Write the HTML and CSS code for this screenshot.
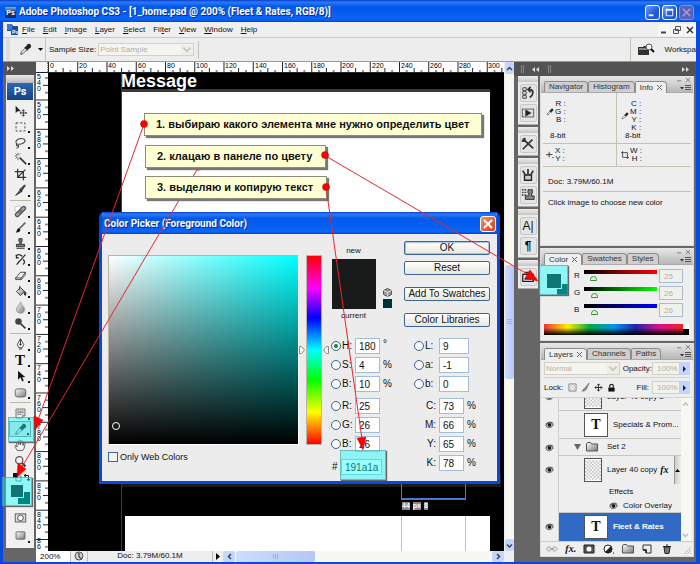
FILE: index.html
```html
<!DOCTYPE html>
<html lang="ru">
<head>
<meta charset="utf-8">
<title>Adobe Photoshop CS3</title>
<link rel="stylesheet" href="styles.css">
</head>
<body>
<svg class="defs" aria-hidden="true">
  <defs>
    <linearGradient id="metal" x1="0" y1="0" x2="1" y2="1"><stop offset="0" stop-color="#fff"/><stop offset="1" stop-color="#777"/></linearGradient>
    <pattern id="checks" width="4" height="4" patternUnits="userSpaceOnUse"><rect width="4" height="4" fill="#fff"/><path d="M0 0h2v2H0zM2 2h2v2H2z" fill="#c4c4c4"/></pattern>
    <pattern id="ticks-x" width="29.25" height="11" patternUnits="userSpaceOnUse"><path d="M.5 0v11M7.8 8v3M15.1 6v5M22.4 8v3" stroke="#222" fill="none"/></pattern>
    <pattern id="ticks-y" y="26.5" width="12" height="29.3" patternUnits="userSpaceOnUse"><path d="M0 .5h12M9 7.8h3M7 15.1h5M9 22.4h3" stroke="#222" fill="none"/></pattern>
  </defs>
  <symbol id="eyedropper" viewBox="0 0 16 16"><path d="M2 14l1-3 5-5 2 2-5 5z" fill="#eee" stroke="#333" stroke-width="1"/><path d="M7 5l4 4M8 6l3-4c2-1 4 1 3 3l-4 3z" fill="#222" stroke="#222" stroke-width="1.3"/></symbol>
  <symbol id="eye" viewBox="0 0 12 10"><path d="M1 6c1-4 8-5 10-1-2 4-8 5-10 1z" fill="#bbb" stroke="#444"/><circle cx="6" cy="5" r="2.3" fill="#111"/><path d="M1 4c2-3 7-4 10-1" fill="none" stroke="#222" stroke-width="1.2"/></symbol>
  <symbol id="flyout" viewBox="0 0 12 8"><path d="M0 3h4l-2 2.500z" fill="#333"/><path d="M5 1.500h6M5 3.500h6M5 5.500h6" stroke="#555"/></symbol>
  <symbol id="winctl" viewBox="0 0 16 8"><path d="M0 5.500h5M10 2l5 5M15 2l-5 5" stroke="#777" fill="none"/></symbol>
  <symbol id="folder" viewBox="0 0 12 10"><path d="M.5 9V2l1-1.500h3l1 1.500h6v7z" fill="url(#metal)" stroke="#555"/></symbol>
</svg>

<div class="window">
  <header class="titlebar">
    <span class="logo">Ps</span>
    <h1>Adobe Photoshop CS3 - [1_home.psd @ 200% (Fleet &amp; Rates, RGB/8)]</h1>
    <button class="sys" aria-label="Minimize"><svg viewBox="0 0 14 14"><path d="M3 10h5" stroke="#fff" stroke-width="2"/></svg></button>
    <button class="sys" aria-label="Maximize"><svg viewBox="0 0 14 14"><path d="M3.500 4v6.500h7V4z" fill="none" stroke="#fff"/><path d="M3 4h8" stroke="#fff" stroke-width="2"/></svg></button>
    <button class="sys sys-off" aria-label="Close"><svg viewBox="0 0 14 14"><path d="M3 3l8 8M11 3l-8 8" stroke="#a9a4d6" stroke-width="1.500"/></svg></button>
  </header>

  <nav class="menubar">
    <svg class="docicon" viewBox="0 0 13 13"><path d="M1 1h5l1 2h5v9H5V8H1z" fill="#1a4c9c"/><path d="M1 1h5v6H1z" fill="#3d79c9"/><text x="6" y="11" class="ps-mini">Ps</text></svg>
    <button><u>F</u>ile</button><button><u>E</u>dit</button><button><u>I</u>mage</button><button><u>L</u>ayer</button><button><u>S</u>elect</button><button>Fil<u>t</u>er</button><button><u>V</u>iew</button><button><u>W</u>indow</button><button><u>H</u>elp</button>
    <span class="docctl">
      <button aria-label="Minimize document"><svg viewBox="0 0 12 12"><path d="M3 8.500h5" stroke="#444" stroke-width="2"/></svg></button>
      <button aria-label="Restore document"><svg viewBox="0 0 12 12"><path d="M4.500 2.500h5v4h-5zM2.500 5.500h5v4h-5z" fill="#eee" stroke="#555"/></svg></button>
      <button aria-label="Close document"><svg viewBox="0 0 12 12"><path d="M3 3l6 6M9 3l-6 6" stroke="#333" stroke-width="1.500"/></svg></button>
    </span>
  </nav>

  <div class="options">
    <button class="current-tool" aria-label="Eyedropper tool"><svg class="i14" viewBox="0 0 16 16"><use href="#eyedropper"/></svg><svg class="i5" viewBox="0 0 5 3"><path d="M0 0h5L2.500 3z"/></svg></button>
    <label for="sample">Sample Size:</label>
    <span class="drop sample"><select id="sample" disabled><option>Point Sample</option></select><svg viewBox="0 0 10 8"><path d="M2 2l3 3 3-3" fill="none" stroke="#c9c7ba" stroke-width="1.500"/></svg></span>
    <span class="rule"></span>
    <button class="bridge" aria-label="Go to Bridge"><svg viewBox="0 0 18 14"><path d="M1 4h5l1-1h5v9H1z" fill="#333"/><path d="M2 5h9v2H2z" fill="#888"/><circle cx="12" cy="4" r="3" fill="#f4f4f4" stroke="#555"/><path d="M14 6l3 3" stroke="#111" stroke-width="2"/></svg></button>
    <span class="workspace-label">Workspa</span>
  </div>

  <main class="work">
    <aside class="toolbox">
      <div class="dockbar"><svg viewBox="0 0 8 5"><path d="M0 0l3 2.500L0 5zM4 0l3 2.500L4 5z" fill="#ddd"/></svg></div>
      <div class="tools">
        <span class="grip"></span>
        <span class="ps">Ps</span>
        <button aria-label="Move"><svg viewBox="0 0 16 16"><path d="M2 2v9l2.500-2 4 0z" fill="#222"/><path d="M11.500 7v8M7.500 11h8M10 8.500L11.500 7 13 8.500M10 13.500l1.500 1.500 1.500-1.500M9 9.500L7.500 11 9 12.500M14 9.500l1.500 1.500-1.500 1.500" fill="none" stroke="#222"/></svg></button>
        <button class="more" aria-label="Marquee"><svg viewBox="0 0 16 16"><path d="M2.500 3.500h11v10h-11z" fill="none" stroke="#333" stroke-dasharray="3 2"/></svg></button>
        <button class="more" aria-label="Lasso"><svg viewBox="0 0 16 16"><path d="M4 10C0 7 4 3 9 3s6 4 2 6-5 1-7 1-1 3 1 2 0 3-2 3" fill="none" stroke="#444" stroke-width="1.300"/></svg></button>
        <button class="more" aria-label="Magic wand"><svg viewBox="0 0 16 16"><path d="M7 7l8 8" stroke="#333" stroke-width="2"/><path d="M5 1v3M5 7v3M1 5h3M2 2l2 2M8 2L7 3M2 8l2-2" stroke="#444"/></svg></button>
        <button aria-label="Crop"><svg viewBox="0 0 16 16"><path d="M4.500 1v10.500H15M1 4.500h10.500V15M5 11l9-9" fill="none" stroke="#333" stroke-width="1.500"/></svg></button>
        <button class="more" aria-label="Slice"><svg viewBox="0 0 16 16"><path d="M2 14l6-7 2 2zM7 7l6-6 1 1-5 7z" fill="#555" stroke="#222"/></svg></button>
        <span class="sep"></span>
        <button class="more" aria-label="Healing brush"><svg viewBox="0 0 16 16"><circle cx="5" cy="5" r="4" fill="#fff" stroke="#bbb"/><path d="M4 12l8-8" stroke="#555" stroke-width="6" stroke-linecap="round"/><path d="M4 12l8-8" stroke="#aaa" stroke-width="3" stroke-linecap="round"/><path d="M6 10l4-4" stroke="#444" stroke-width="3" stroke-dasharray="1 1"/></svg></button>
        <button class="more" aria-label="Brush"><svg viewBox="0 0 16 16"><path d="M6 10l8-8" stroke="#666" stroke-width="2"/><path d="M2 14c2-1 1-4 4-5l2 2c-1 3-4 3-6 3z" fill="#111"/></svg></button>
        <button class="more" aria-label="Clone stamp"><svg viewBox="0 0 16 16"><path d="M6 2h4v3L9 7v2h4v3H3V9h4V7L6 5zM3 14h10" fill="#777" stroke="#222"/></svg></button>
        <button class="more" aria-label="History brush"><svg viewBox="0 0 16 16"><path d="M3 14c2 0 2-3 4-4l7-8M2 4c3-3 6-2 8 0M11 8c3 2 2 5 0 6M3 2v4h3" fill="none" stroke="#222" stroke-width="1.500"/></svg></button>
        <button class="more" aria-label="Eraser"><svg viewBox="0 0 16 16"><path d="M2 11l6-7h6l-5 7zM2 11v2h7l5-6V4M9 11v2" fill="#eee" stroke="#333"/></svg></button>
        <button class="more" aria-label="Paint bucket"><svg viewBox="0 0 16 16"><path d="M3 8l5-5 5 5-5 5z" fill="url(#metal)" stroke="#222"/><path d="M7 1v5M13 8c2 1 2 3 1 5-2-1-1-3-1-5z" fill="#222" stroke="#222"/></svg></button>
        <button class="more" aria-label="Blur"><svg viewBox="0 0 16 16"><path d="M8 1c1 4 5 6 5 9a5 5 0 0 1-10 0c0-3 4-5 5-9z" fill="url(#metal)" stroke="#999"/></svg></button>
        <button class="more" aria-label="Dodge"><svg viewBox="0 0 16 16"><circle cx="5.500" cy="5.500" r="4" fill="#444"/><path d="M8 8l6 6" stroke="#333" stroke-width="2"/></svg></button>
        <span class="sep"></span>
        <button class="more" aria-label="Pen"><svg viewBox="0 0 16 16"><path d="M8 1l4 7-2 4H6L4 8zM8 1v7M6 13.500h4" fill="#fff" stroke="#222"/><circle cx="8" cy="8" r="1.200"/></svg></button>
        <button class="more glyph-t" aria-label="Type">T</button>
        <button class="more" aria-label="Path selection"><svg viewBox="0 0 16 16"><path d="M5 1v11l3-3 2 5 2-1-2-4h4z" fill="#111"/></svg></button>
        <button class="more" aria-label="Shape"><svg viewBox="0 0 16 16"><rect x="1.500" y="3.500" width="13" height="10" rx="3" fill="url(#metal)" stroke="#555"/></svg></button>
        <span class="sep"></span>
        <button class="more" aria-label="Notes"><svg viewBox="0 0 16 16"><path d="M2.500 2.500h11v8l-3 3h-8z" fill="#eee" stroke="#555"/><path d="M4 5h8M4 7h8M4 9h5M10.500 13v-3h3" fill="none" stroke="#666"/></svg></button>
        <button class="more active" aria-label="Eyedropper"><svg viewBox="0 0 16 16"><use href="#eyedropper"/></svg></button>
        <button aria-label="Hand"><svg viewBox="0 0 16 16"><path d="M4 14C2 11 0 8 2 8l2 2-1-6c1-2 2 0 2 0l1 3V2c1-2 2 0 2 0v5l1-4c1-2 2 0 2 0v5l1-3c2-1 2 1 1 3 0 3-1 4-2 6z" fill="#f5f5f5" stroke="#444"/></svg></button>
        <button aria-label="Zoom"><svg viewBox="0 0 16 16"><circle cx="6.500" cy="6.500" r="4.500" fill="#eee" stroke="#555" stroke-width="1.500"/><path d="M10 10l4 4" stroke="#222" stroke-width="2.500"/></svg></button>
        <span class="mini"><svg viewBox="0 0 24 9"><path d="M8 3h5v5H8z" fill="#fff" stroke="#777"/><path d="M5 0h5v5H5z" fill="#111"/><path d="M16 2.500h4.500V7M18 1l-2 1.500L18 4M19 6l1.500 2L22 6" fill="none" stroke="#222"/></svg></span>
        <span class="swatches"><i class="bg"></i><i class="fg"></i></span>
        <button aria-label="Quick mask"><svg viewBox="0 0 16 16"><rect x="1.500" y="3.500" width="13" height="10" fill="#ddd" stroke="#444"/><circle cx="8" cy="8.500" r="3.500" fill="#fff" stroke="#333"/></svg></button>
        <button class="more" aria-label="Screen mode"><svg viewBox="0 0 16 16"><rect x="2.500" y="3.500" width="11" height="9" rx="1" fill="url(#metal)" stroke="#555"/></svg></button>
      </div>
    </aside>

    <section class="document">
      <div class="ruler-x"><span class="corner"></span><svg class="ruler-svg"><rect width="100%" height="11" fill="url(#ticks-x)"/><g><text x="2" y="6">0</text><text x="31" y="6">20</text><text x="60" y="6">40</text><text x="90" y="6">60</text><text x="119" y="6">80</text><text x="148" y="6">100</text><text x="177" y="6">120</text><text x="207" y="6">140</text><text x="236" y="6">160</text><text x="265" y="6">180</text><text x="294" y="6">200</text><text x="324" y="6">220</text><text x="353" y="6">240</text><text x="382" y="6">260</text><text x="411" y="6">280</text><text x="440" y="6">300</text></g></svg></div>
      <div class="ruler-y"><svg class="ruler-svg"><rect width="12" height="100%" fill="url(#ticks-y)"/><g>
        <text><tspan x="1" y="6">5</tspan><tspan x="1" y="12">4</tspan><tspan x="1" y="18">0</tspan></text>
        <text><tspan x="1" y="34">5</tspan><tspan x="1" y="40">6</tspan><tspan x="1" y="46">0</tspan></text>
        <text><tspan x="1" y="63">5</tspan><tspan x="1" y="69">8</tspan><tspan x="1" y="75">0</tspan></text>
        <text><tspan x="1" y="92">6</tspan><tspan x="1" y="98">0</tspan><tspan x="1" y="104">0</tspan></text>
        <text><tspan x="1" y="122">6</tspan><tspan x="1" y="128">2</tspan><tspan x="1" y="134">0</tspan></text>
        <text><tspan x="1" y="151">6</tspan><tspan x="1" y="157">4</tspan><tspan x="1" y="163">0</tspan></text>
        <text><tspan x="1" y="180">6</tspan><tspan x="1" y="186">6</tspan><tspan x="1" y="192">0</tspan></text>
        <text><tspan x="1" y="210">6</tspan><tspan x="1" y="216">8</tspan><tspan x="1" y="222">0</tspan></text>
        <text><tspan x="1" y="239">7</tspan><tspan x="1" y="245">0</tspan><tspan x="1" y="251">0</tspan></text>
        <text><tspan x="1" y="268">7</tspan><tspan x="1" y="274">2</tspan><tspan x="1" y="280">0</tspan></text>
        <text><tspan x="1" y="297">7</tspan><tspan x="1" y="303">4</tspan><tspan x="1" y="309">0</tspan></text>
        <text><tspan x="1" y="327">7</tspan><tspan x="1" y="333">6</tspan><tspan x="1" y="339">0</tspan></text>
        <text><tspan x="1" y="356">7</tspan><tspan x="1" y="362">8</tspan><tspan x="1" y="368">0</tspan></text>
        <text><tspan x="1" y="385">8</tspan><tspan x="1" y="391">0</tspan><tspan x="1" y="397">0</tspan></text>
        <text><tspan x="1" y="415">8</tspan><tspan x="1" y="421">2</tspan><tspan x="1" y="427">0</tspan></text>
        <text><tspan x="1" y="444">8</tspan><tspan x="1" y="450">4</tspan><tspan x="1" y="456">0</tspan></text>
        <text><tspan x="1" y="470">8</tspan><tspan x="1" y="476">6</tspan></text></g></svg></div>
      <div class="canvas">
        <div class="art art-band"></div>
        <div class="art art-heading">Message</div>
        <div class="art art-page"></div>
        <div class="art art-shade"></div>
        <div class="art art-foot"></div>
        <div class="art guide guide-a"></div>
        <div class="art guide-box"></div>
        <div class="art guide-box guide-low"></div>
        <div class="art art-tag"><b>44</b><b>px</b><b>8</b></div>
      </div>
      <div class="vscroll">
        <button aria-label="Scroll up"><svg viewBox="0 0 9 9"><path d="M2 6l2.500-2.500L7 6" fill="none" stroke="#345" stroke-width="1.500"/></svg></button>
        <span class="gap-top"></span><span class="thumb"><i></i></span><span class="gap-bottom"></span>
        <button aria-label="Scroll down"><svg viewBox="0 0 9 9"><path d="M2 3.500L4.500 6 7 3.500" fill="none" stroke="#345" stroke-width="1.500"/></svg></button>
      </div>
      <footer class="status">
        <input class="zoomlevel" aria-label="Zoom" value="200%">
        <span class="cs"><svg viewBox="0 0 12 10"><circle cx="6" cy="5" r="4" fill="#ccc" stroke="#555"/><path d="M6 2v4l3 2" stroke="#222" fill="none"/></svg></span>
        <span class="docsize">Doc: 3.79M/60.1M</span>
        <button class="play" aria-label="Status menu"><svg viewBox="0 0 5 7"><path d="M0 0v7l4-3.500z"/></svg></button>
        <button class="hb" aria-label="Scroll left"><svg viewBox="0 0 9 9"><path d="M6 2L3.500 4.500 6 7" fill="none" stroke="#345" stroke-width="1.500"/></svg></button>
        <span class="thumb hthumb"><i></i></span><span class="hgap"></span>
        <button class="hb" aria-label="Scroll right"><svg viewBox="0 0 9 9"><path d="M3 2l2.500 2.500L3 7" fill="none" stroke="#345" stroke-width="1.500"/></svg></button>
        <span class="hcorner"></span>
      </footer>
    </section>

    <aside class="dock">
      <div class="dockbar dock-head"><i class="grips"></i><svg viewBox="0 0 8 5"><path d="M3 0L0 2.500 3 5zM7 0L4 2.500 7 5z" fill="#ddd"/></svg><i class="grips"></i><svg class="push" viewBox="0 0 8 5"><path d="M0 0l3 2.500L0 5zM4 0l3 2.500L4 5z" fill="#ddd"/></svg></div>
      <div class="dock-cols">
        <div class="iconcol">
          <div class="grp"><button aria-label="History"><svg viewBox="0 0 16 16"><path d="M2 2h4v3H2zM2 6.500h4v3H2zM2 11h4v3H2z" fill="#eee" stroke="#333"/><path d="M8 4h3c4 1 3 7-1 9M11 1L8 4l3 3" fill="none" stroke="#333" stroke-width="2"/></svg></button><button aria-label="Actions"><svg viewBox="0 0 16 16"><rect x="1.500" y="3.500" width="13" height="9" fill="#ddd" stroke="#555"/><path d="M5 4v8l7-4z" fill="#222"/></svg></button></div>
          <div class="grp"><button aria-label="Tool presets"><svg viewBox="0 0 16 16"><path d="M2 2l12 11M2 14L13 3M1 4c3 2 4 0 3-3" fill="none" stroke="#333" stroke-width="2"/></svg></button></div>
          <div class="grp"><button aria-label="Brushes"><svg viewBox="0 0 16 16"><path d="M4 8h8v6H4z" fill="#ccc" stroke="#222" stroke-width="1.500"/><path d="M5 8L2 3M8 8V1M11 8l3-5" stroke="#333" stroke-width="2"/></svg></button><button aria-label="Clone source"><svg viewBox="0 0 16 16"><path d="M1 2h5M1 5h5M1 8h5" stroke="#444" stroke-width="1.500" stroke-dasharray="2 1"/><path d="M8 2h5v4h-1v3h3v4H5V9h4V6H8z" fill="#888" stroke="#222"/></svg></button></div>
          <div class="grp"><button class="glyph" aria-label="Character">A|</button><button class="glyph glyph-b" aria-label="Paragraph">¶</button></div>
          <div class="grp"><button aria-label="Layer comps"><svg viewBox="0 0 16 16"><path d="M2 5h12v8H2z" fill="#eee" stroke="#222" stroke-width="1.500"/><path d="M4 3h8M4 10h8" stroke="#333" stroke-width="2"/></svg></button></div>
        </div>

        <div class="panels">
          <section class="panel">
            <div class="tabs"><button>Navigator</button><button>Histogram</button><button class="on">Info <svg viewBox="0 0 5 5"><path d="M0 0l5 5M5 0L0 5" stroke="#666"/></svg></button><span class="tabctl"><svg viewBox="0 0 16 8"><use href="#winctl"/></svg><svg class="fly" viewBox="0 0 12 8"><use href="#flyout"/></svg></span></div>
            <div class="info">
              <div class="info-cell"><svg viewBox="0 0 16 16"><use href="#eyedropper"/></svg><p>R :<br>G :<br>B :</p><p class="bit">8-bit</p></div>
              <div class="info-cell"><svg viewBox="0 0 16 16"><use href="#eyedropper"/></svg><p>C :<br>M :<br>Y :<br>K :</p><p class="bit">8-bit</p></div>
              <div class="info-cell low"><svg viewBox="0 0 10 10"><path d="M4 1v7M0 4.500h8M8 8h1v1" stroke="#222" fill="none"/></svg><p>X :<br>Y :</p></div>
              <div class="info-cell low"><svg viewBox="0 0 10 10"><path d="M2 0v8h8M0 2h8v8" stroke="#333" fill="none"/></svg><p>W :<br>H :</p></div>
            </div>
            <p class="info-line">Doc: 3.79M/60.1M</p>
            <p class="info-line hint">Click image to choose new color</p>
          </section>

          <section class="panel">
            <div class="tabs"><button class="on">Color <svg viewBox="0 0 5 5"><path d="M0 0l5 5M5 0L0 5" stroke="#666"/></svg></button><button>Swatches</button><button>Styles</button><span class="tabctl"><svg viewBox="0 0 16 8"><use href="#winctl"/></svg><svg class="fly" viewBox="0 0 12 8"><use href="#flyout"/></svg></span></div>
            <div class="color">
              <span class="swatches"><i class="bg"></i><i class="fg"></i></span>
              <div class="sliders">
                <label for="cr">R</label><input type="range" class="sr" aria-label="Red level" max="255" value="25"><input id="cr" value="25" disabled>
                <label for="cg">G</label><input type="range" class="sg" aria-label="Green level" max="255" value="26"><input id="cg" value="26" disabled>
                <label for="cb">B</label><input type="range" class="sb" aria-label="Blue level" max="255" value="26"><input id="cb" value="26" disabled>
              </div>
            </div>
            <div class="spectrum"><span></span><i></i></div>
          </section>

          <section class="panel layers">
            <div class="tabs"><button class="on">Layers <svg viewBox="0 0 5 5"><path d="M0 0l5 5M5 0L0 5" stroke="#666"/></svg></button><button>Channels</button><button>Paths</button><span class="tabctl"><svg viewBox="0 0 16 8"><use href="#winctl"/></svg><svg class="fly" viewBox="0 0 12 8"><use href="#flyout"/></svg></span></div>
            <div class="lrow"><span class="drop blend"><select aria-label="Blend mode" disabled><option>Normal</option></select><svg viewBox="0 0 10 8"><path d="M2 2l3 3 3-3" fill="none" stroke="#c9c7ba" stroke-width="1.500"/></svg></span><label for="op">Opacity:</label><span class="pct"><input id="op" value="100%" disabled><button aria-label="Opacity slider"><svg viewBox="0 0 4 6"><path d="M0 0v6l3-3z" fill="#124"/></svg></button></span></div>
            <div class="lrow"><span>Lock:</span><span class="locks"><svg viewBox="0 0 10 10"><path d="M1 1h8v8H1z" fill="url(#checks)" stroke="#888"/></svg><svg viewBox="0 0 10 10"><path d="M1 9c2 0 1-3 3-3l5-6-3 7c-2 2-3 2-5 2z" fill="#888" stroke="#444" stroke-width=".5"/></svg><svg viewBox="0 0 10 10"><path d="M5 1v8M1 5h8M3.500 2.500L5 1l1.500 1.500M3.500 7.500L5 9l1.500-1.500M2.500 3.500L1 5l1.500 1.500M7.500 3.500L9 5 7.500 6.500" fill="none" stroke="#222"/></svg><svg viewBox="0 0 10 10"><path d="M1.500 5h7v4.500h-7z" fill="#111"/><path d="M3 5V3c0-2 4-2 4 0v2" fill="none" stroke="#222" stroke-width="1.300"/></svg></span><label class="fill" for="fl">Fill:</label><span class="pct"><input id="fl" value="100%" disabled><button aria-label="Fill slider"><svg viewBox="0 0 4 6"><path d="M0 0v6l3-3z" fill="#124"/></svg></button></span></div>
            <div class="list">
              <ul>
                <li><span class="vis"><svg viewBox="0 0 12 10"><use href="#eye"/></svg></span><div class="ly"><svg class="th" viewBox="0 0 18 22"><path d="M0 0h18v22H0z" fill="url(#checks)"/></svg><span>Layer 40 copy 2</span></div></li>
                <li><span class="vis"><svg viewBox="0 0 12 10"><use href="#eye"/></svg></span><div class="ly wide"><span class="th tt">T</span><span>Specials &amp; Prom...</span></div></li>
                <li class="set"><span class="vis"><svg viewBox="0 0 12 10"><use href="#eye"/></svg></span><div class="ly"><svg class="tri" viewBox="0 0 7 6"><path d="M0 0h7L3.500 6z" fill="#666"/></svg><svg class="fold" viewBox="0 0 12 10"><use href="#folder"/></svg><span>Set 2</span></div></li>
                <li class="copy"><span class="vis"><svg viewBox="0 0 12 10"><use href="#eye"/></svg></span><div class="ly"><svg class="th" viewBox="0 0 18 22"><path d="M0 0h18v22H0z" fill="url(#checks)"/></svg><span>Layer 40 copy</span><i class="fx">fx</i><button class="fold-fx" aria-label="Collapse effects"><svg viewBox="0 0 5 3"><path d="M0 3h5L2.500 0z"/></svg></button></div></li>
                <li class="sub"><span class="vis"></span><div class="ly"><span>Effects</span></div></li>
                <li class="sub eff"><span class="vis"></span><div class="ly"><svg viewBox="0 0 12 10"><use href="#eye"/></svg><span>Color Overlay</span></div></li>
                <li class="sel"><span class="vis"><svg viewBox="0 0 12 10"><use href="#eye"/></svg></span><div class="ly wide"><span class="th tt">T</span><b>Fleet &amp; Rates</b></div></li>
              </ul>
              <div class="lscroll"><svg viewBox="0 0 9 9"><path d="M2 6l2.500-2.500L7 6" fill="none" stroke="#bbb" stroke-width="1.500"/></svg><svg viewBox="0 0 9 9"><path d="M2 3.500L4.500 6 7 3.500" fill="none" stroke="#bbb" stroke-width="1.500"/></svg></div>
            </div>
            <div class="lbar">
              <svg viewBox="0 0 13 10"><path d="M1 5c0-3 4-3 5 0-1 3-5 3-5 0zM7 5c0-3 4-3 5 0-1 3-5 3-5 0zM4 5h5" fill="none" stroke="#999"/></svg>
              <i class="fx">fx.</i>
              <svg viewBox="0 0 12 10"><path d="M1 1h10v8H1z" fill="#555" stroke="#222"/><circle cx="6" cy="5" r="2.500" fill="#fff"/></svg>
              <svg viewBox="0 0 12 10"><circle cx="5" cy="5" r="4" fill="#fff" stroke="#222"/><path d="M2 8L8 2a4 4 0 0 1-6 6z" fill="#222"/><path d="M10 9h1" stroke="#000"/></svg>
              <svg viewBox="0 0 12 10"><use href="#folder"/></svg>
              <svg viewBox="0 0 12 10"><path d="M2 1h8v8H5V6H2z" fill="#eee" stroke="#333"/><path d="M2 6h3v3" stroke="#222" fill="none" stroke-width="1.500"/></svg>
              <svg viewBox="0 0 12 10"><path d="M3 3h6l-1 6.500H4zM2 2.500h8M5 1h2" fill="#777" stroke="#222"/></svg>
              <svg viewBox="0 0 12 10"><path d="M4 10l7-7M7 10l4-4M10 10l1-1" stroke="#bbb"/></svg>
            </div>
          </section>
        </div>
      </div>
    </aside>
  </main>

  <section class="dialog" aria-label="Color Picker">
    <header><h2>Color Picker (Foreground Color)</h2><button class="x" aria-label="Close dialog"><svg viewBox="0 0 14 14"><path d="M3 3l8 8M11 3l-8 8" stroke="#fff" stroke-width="2"/></svg></button></header>
    <div class="dbody">
      <div class="pick">
        <div class="field"><i></i></div>
        <label class="web"><input type="checkbox"> Only Web Colors</label>
      </div>
      <div class="huewrap"><svg viewBox="0 0 6 8"><path d="M.5.500h2l3 3.500-3 3.500h-2z" fill="#fff" stroke="#888"/></svg><span class="hue"></span><svg viewBox="0 0 6 8"><path d="M5.500.500h-2L.5 4l3 3.500h2z" fill="#fff" stroke="#888"/></svg></div>
      <div class="side">
        <div class="top">
          <div class="preview"><span>new</span><i></i><span>current</span></div>
          <div class="warn"><svg viewBox="0 0 9 9"><path d="M4.500.500l4 2v4l-4 2-4-2v-4z" fill="#999" stroke="#555"/><path d="M.5 2.500l4 2 4-2M4.500 4.500v4" fill="none" stroke="#ddd"/></svg><i></i></div>
          <div class="btns"><button class="default">OK</button><button>Reset</button><button class="spaced">Add To Swatches</button><button class="spaced">Color Libraries</button></div>
        </div>
        <div class="vals">
          <div class="col">
            <div class="v"><input type="radio" name="m" id="mh" checked><label for="mh">H:</label><input aria-label="Hue" value="180"><span class="deg">°</span></div>
            <div class="v"><input type="radio" name="m" id="ms"><label for="ms">S:</label><input aria-label="Saturation" value="4"><span>%</span></div>
            <div class="v"><input type="radio" name="m" id="mb"><label for="mb">B:</label><input aria-label="Brightness" value="10"><span>%</span></div>
            <div class="v brk"><input type="radio" name="m" id="mr"><label for="mr">R:</label><input aria-label="Red" value="25"></div>
            <div class="v"><input type="radio" name="m" id="mg"><label for="mg">G:</label><input aria-label="Green" value="26"></div>
            <div class="v"><input type="radio" name="m" id="mbl"><label for="mbl">B:</label><input aria-label="Blue" value="26"></div>
            <div class="v hex"><label for="hex">#</label><input id="hex" value="191a1a"></div>
          </div>
          <div class="col">
            <div class="v lab"><input type="radio" name="m" id="ml"><label for="ml">L:</label><input aria-label="Lightness" value="9"></div>
            <div class="v lab"><input type="radio" name="m" id="ma"><label for="ma">a:</label><input aria-label="a channel" value="-1"></div>
            <div class="v lab"><input type="radio" name="m" id="mbb"><label for="mbb">b:</label><input aria-label="b channel" value="0"></div>
            <div class="v cmyk brk"><label for="kc">C:</label><input id="kc" value="73"><span>%</span></div>
            <div class="v cmyk"><label for="km">M:</label><input id="km" value="66"><span>%</span></div>
            <div class="v cmyk"><label for="ky">Y:</label><input id="ky" value="65"><span>%</span></div>
            <div class="v cmyk"><label for="kk">K:</label><input id="kk" value="78"><span>%</span></div>
          </div>
        </div>
      </div>
    </div>
  </section>

  <div class="marks">
    <svg class="lines" viewBox="0 0 700 564"><path d="M184 168h31" stroke="#444" stroke-width="2"/><path d="M198 168L22 467" stroke="#e8262c"/><circle cx="198" cy="167" r="3.500" fill="#f00"/></svg>
    <span class="hl hl-tool"></span><span class="hl hl-sw"></span><span class="hl hl-color"></span><span class="hl hl-hex"></span>
    <p class="note n1">1. выбираю какого элемента мне нужно определить цвет</p>
    <p class="note n2">2. клацаю в панеле по цвету</p>
    <p class="note n3">3. выделяю и копирую текст</p>
    <svg class="lines" viewBox="0 0 700 564">
      <path d="M144 124L38 420M324 155l205 120M326 187l36 252" stroke="#e8262c" fill="none"/>
      <path d="M35 430l-1-14 9 4zM17 477l1-14 8 6zM538 281l-13-3 5-8zM363 450l-6-12 9-1z" fill="#f00" stroke="#c00" stroke-width=".5"/>
      <g fill="#f00" stroke="#a00" stroke-width=".5"><circle cx="144" cy="124" r="3.500"/><circle cx="325" cy="155" r="3.500"/><circle cx="326" cy="187" r="3.500"/></g>
    </svg>
  </div>
</div>
</body>
</html>
```
FILE: styles.css
```css
* { box-sizing: border-box; }
html, body { margin: 0; height: 100%; }
body { font: 8px/10px "Liberation Sans", Arial, sans-serif; color: #111; background: #0a49d8; overflow: hidden; }
button, input, select { font: inherit; color: inherit; margin: 0; padding: 0; border: 0; background: none; min-width: 0; }
p, h1, h2, ul { margin: 0; padding: 0; font: inherit; list-style: none; }
svg { display: block; flex: none; }
.defs { position: absolute; width: 0; height: 0; }

.window { position: relative; display: flex; flex-direction: column; min-height: 100%; padding: 0 4px 2px 3px; background: #0a49e0; overflow: hidden; }

.titlebar { display: flex; align-items: center; gap: 2px; height: 22px; flex: none; margin: 0 -4px 0 -3px; padding: 2px 6px 0 5px; background: linear-gradient(#0a3fd0, #2a7af8 10%, #0358e8 30%, #0560f2 70%, #0a66fb 88%, #0346d0); }
.logo { width: 11px; height: 11px; margin-right: 1px; background: linear-gradient(#7bb0e0, #10306c 50%); color: #fff; font: bold 7px/11px "Liberation Sans", sans-serif; text-align: center; }
.titlebar h1 { flex: 1; color: #fff; font: bold 10px/14px Roboto, sans-serif; text-shadow: 1px 1px 0 #0a2a80; white-space: nowrap; }
.sys { width: 15px; height: 15px; border: 1px solid #fff; border-radius: 3px; background: linear-gradient(135deg, #6f9bf5, #2257dd 60%); }
.sys-off { border-color: #8a90d8; background: #5a5fb8; }

.menubar { display: flex; align-items: center; height: 15px; flex: none; padding-left: 3px; background: #efefef; }
.menubar > button { margin-right: 8px; }
.docicon { width: 13px; height: 13px; margin-right: 3px; }
.ps-mini { font: bold 5px "Liberation Sans", sans-serif; fill: #fff; }
.docctl { display: flex; gap: 1px; margin-left: auto; }
.docctl button { width: 12px; height: 12px; background: #f8f8f4; }

.options { display: flex; align-items: center; height: 25px; flex: none; border-top: 1px solid #c8c8c4; border-bottom: 1px solid #999; background: #ededed; }
.current-tool { display: flex; align-items: center; gap: 6px; height: 23px; width: 40px; margin-left: 3px; padding-left: 9px; border-right: 1px solid #c4c2b4; border-left: 4px solid #dcdcdc; }
.i14 { width: 13px; height: 13px; }
.i5 { width: 5px; height: 3px; }
.options label { margin: 0 2px 0 3px; }
.drop { display: flex; align-items: center; border: 1px solid #d3d1c4; background: #f4f4f0; }
.drop select { flex: 1; appearance: none; color: #b4b1a4; opacity: 1; padding-left: 1px; }
.drop svg { width: 12px; height: 10px; background: #efeee6; }
.sample { width: 96px; height: 13px; }
.rule { width: 1px; height: 18px; margin-left: 4px; background: #c4c2b4; }
.bridge { display: flex; align-items: center; width: 34px; height: 23px; margin-left: auto; padding-left: 6px; border-left: 1px solid #c4c2b4; }
.bridge svg { width: 18px; height: 14px; }
.workspace-label { margin-left: 1px; }

.work { display: flex; flex: 1; background: #666; }
.dockbar { display: flex; align-items: center; height: 13px; flex: none; padding: 0 4px; background: #535353; }
.dockbar svg { width: 8px; height: 5px; }

.toolbox { display: flex; flex-direction: column; width: 33px; flex: none; }
.tools { display: flex; flex-direction: column; align-items: center; width: 28px; margin-left: 3px; background: #f0f0f0; padding-bottom: 4px; }
.grip { width: 28px; height: 8px; background: linear-gradient(#e8e8e8, #bbb); flex: none; }
.ps { width: 26px; height: 17px; margin-bottom: 2px; background: linear-gradient(#2c68b8, #164084); color: #fff; font: bold 11px/17px Roboto, sans-serif; text-align: center; flex: none; }
.tools button { position: relative; width: 22px; height: 16px; display: flex; align-items: center; justify-content: center; }
.tools button svg { width: 13px; height: 13px; }
.more::after { content: ""; position: absolute; right: 1px; bottom: 1px; border: 1px solid #111; }
.tools .active { border: 1px solid #888; background: #ddd; }
.glyph-t { font: bold 15px/16px "Liberation Serif", serif; }
.sep { width: 21px; height: 1px; margin: 2px 0; background: #bbb8aa; flex: none; }
.mini { margin-top: 4px; }
.mini svg { width: 24px; height: 9px; }
.swatches { display: grid; width: 21px; height: 21px; flex: none; }
.swatches i { grid-area: 1 / 1; width: 14px; height: 14px; border: 1px solid #eee; background: #1a1a1a; }
.swatches .bg { align-self: end; justify-self: end; background: #033; }
.tools .swatches { margin: 2px 0 3px; }
.tools .swatches ~ button { height: 18px; }

.document { display: grid; flex: 1; grid-template: 11px 1fr 11px / 12px 1fr 10px; min-width: 0; background: #f4f4f0; }
.ruler-x { grid-area: 1 / 1 / 2 / 3; display: flex; border-bottom: 1px solid #222; background: #fff; overflow: hidden; }
.corner { width: 12px; flex: none; border-right: 1px dotted #888; background: #f4f4f4; }
.ruler-svg { flex: 1; width: 100%; height: 100%; font: 7px "Liberation Sans", sans-serif; }
.ruler-y { grid-area: 2 / 1; background: #fff; overflow: hidden; height: 0; min-height: 100%; }
.canvas { grid-area: 2 / 2; position: relative; background: #000; overflow: hidden; }
.art { position: absolute; }
.art-band { left: 74px; right: 14px; top: 16px; height: 3px; background: #3a3a3a; }
.art-heading { left: 73px; top: -2px; color: #fff; font: bold 18px/20px "Liberation Sans", sans-serif; }
.art-page { left: 74px; right: 14px; top: 19px; height: 160px; background: #fff; }
.art-shade { left: 74px; right: 3px; top: 400px; height: 14px; background: #1a1a1a; }
.art-foot { left: 77px; right: 14px; top: 443px; bottom: 0; background: #fff; }
.guide-a { left: 73px; top: 0; bottom: 0; width: 1px; background: #22407c; }
.guide-box { left: 353px; top: 400px; width: 65px; height: 27px; border: solid #4a78d0; border-width: 0 1px 2px; }
.guide-low { top: 443px; height: 60px; border-color: #a8c4f4; }
.art-tag { left: 354px; top: 429px; display: flex; gap: 3px; color: #fff; font: 7px/8px "Liberation Sans", sans-serif; }
.art-tag b { background: #888; }

.vscroll { grid-area: 1 / 3 / 3 / 4; display: flex; flex-direction: column; background: #f8f8f0; border-left: 1px solid #eee; }
.vscroll button, .hb { display: flex; align-items: center; justify-content: center; width: 9px; height: 12px; background: #c4d5fa; border-radius: 2px; flex: none; }
.vscroll svg, .hb svg { width: 9px; height: 9px; }
.gap-top { flex: 191; }
.gap-bottom { flex: 160; }
.thumb { display: flex; align-items: center; justify-content: center; flex: 114; background: linear-gradient(90deg, #cddcfc, #b4c8f4); border-radius: 2px; }
.thumb i { width: 5px; height: 6px; background: repeating-linear-gradient(#9ab2e8 0 1px, transparent 1px 2px); }
.status { grid-area: 3 / 1 / 4 / 4; display: flex; align-items: stretch; background: #f8f8f0; }
.zoomlevel { width: 35px; padding-left: 4px; background: #fff; border-right: 1px solid #bbb; }
.cs { width: 17px; padding-left: 2px; background: #eee; border-right: 1px solid #bbb; }
.cs svg { width: 12px; height: 10px; }
.docsize { width: 125px; text-align: center; background: #eee; border-right: 1px solid #bbb; }
.play { width: 10px; padding-left: 3px; background: #eee; }
.play svg { width: 5px; height: 7px; }
.hb { width: 12px; height: 11px; }
.hthumb { flex: 79; margin: 0 1px; }
.hthumb i { width: 6px; height: 5px; background: repeating-linear-gradient(90deg, #9ab2e8 0 1px, transparent 1px 2px); }
.hgap { flex: 175; }
.hcorner { width: 10px; background: #eee; }

.dock { display: flex; flex-direction: column; width: 182px; flex: none; }
.dock-head { gap: 8px; height: 14px; padding: 0 6px 0 7px; }
.grips { width: 3px; height: 8px; border: 1px solid #888; border-width: 0 1px; }
.push { margin-left: auto; }
.dock-cols { display: flex; gap: 2px; padding: 0 2px 5px 4px; }
.iconcol { display: flex; flex-direction: column; gap: 2px; width: 20px; flex: none; }
.grp { display: flex; flex-direction: column; align-items: center; gap: 2px; padding: 0 0 2px; background: #ececec; border-bottom: 1px solid #aaa; }
.grp::before { content: ""; width: 20px; height: 6px; background: linear-gradient(#eee, #c4c4c4); }
.grp button { display: flex; align-items: center; justify-content: center; width: 17px; height: 18px; border: 1px solid #c8c8c8; border-radius: 2px; background: #e4e4e4; }
.grp svg { width: 14px; height: 14px; }
.grp .glyph { font: 12px/16px "Liberation Sans", sans-serif; }
.grp .glyph-b { font-weight: bold; }

.panels { display: flex; flex-direction: column; gap: 2px; flex: 1; min-width: 0; }
.panel { display: flex; flex-direction: column; background: #eee; border: 1px solid #ddd; border-top: 0; }
.panel:first-child { height: 170px; }
.panel:nth-child(2) { height: 93px; }
.tabs { display: flex; align-items: flex-end; height: 17px; flex: none; padding-left: 3px; background: linear-gradient(#e8e8e8, #b8b8b8); border-bottom: 1px solid #aaa; }
.tabs button { display: flex; align-items: center; gap: 4px; height: 11px; padding: 0 4px; border: 1px solid #8c8c8c; border-bottom: 0; border-radius: 2px 4px 0 0; background: #cfcfcf; color: #333; }
.tabs .on { height: 12px; margin-bottom: -1px; background: #eee; }
.tabs button svg { width: 5px; height: 5px; }
.tabctl { display: flex; flex-direction: column; align-items: flex-end; gap: 1px; margin-left: auto; }
.tabctl svg { width: 16px; height: 7px; margin-right: 1px; }
.tabctl .fly { width: 12px; height: 8px; }

.info { display: grid; grid-template-columns: 1fr 1fr; margin: 0 2px; }
.info-cell { position: relative; display: flex; flex-wrap: wrap; align-content: flex-start; align-items: center; height: 51px; padding: 7px 0 0 3px; border-bottom: 1px solid #c4c2b4; line-height: 8px; }
.info-cell:nth-child(odd) { border-right: 1px solid #c4c2b4; }
.info-cell svg { width: 8px; height: 8px; margin-right: 1px; }
.info-cell p { text-align: right; }
.info-cell .bit { flex-basis: 100%; margin: 8px 0 0 4px; text-align: left; }
.info-cell:nth-child(2) .bit { margin-top: 0; }
.info-cell.low { height: 23px; padding-top: 3px; }
.info-cell:nth-child(even) { padding-left: 4px; }
.info-line { margin: 0 2px; padding: 10px 5px 4px; border-bottom: 1px solid #c4c2b4; }
.hint { padding-top: 6px; border-bottom: 0; }

.color { display: flex; gap: 5px; padding: 4px 10px 0 4px; }
.sliders { display: grid; grid-template-columns: 8px 1fr 24px; gap: 3px 2px; flex: 1; align-items: center; }
.color .swatches { margin: 4px 0 0 1px; width: 23px; height: 23px; }
.color .swatches .fg { width: 16px; height: 16px; }
.color .swatches .bg { width: 13px; height: 13px; }
.sliders input:not([type]) { height: 14px; border: 1px solid #aabdd0; background: #f0f0ec; color: #b4b1a4; padding-left: 4px; }
input[type="range"] { appearance: none; width: 73px; height: 12px; background: linear-gradient(90deg, #000, #f00) 0 0 / 100% 4px no-repeat; }
input.sg { background-image: linear-gradient(90deg, #000, #0f0); }
input.sb { background-image: linear-gradient(90deg, #000, #00f); }
input[type="range"]::-webkit-slider-thumb { appearance: none; width: 7px; height: 5px; margin-top: 5px; background: #e8f8e0; border: 1px solid #3a8a3a; border-radius: 4px 4px 0 0; }
.spectrum { display: flex; height: 11px; margin: 7px 4px 0 3px; }
.spectrum span { flex: 1; background: linear-gradient(transparent 35%, #000), linear-gradient(90deg, #e33, #fe0 17%, #0a4 33%, #09e 50%, #22a 66%, #d18 83%, #e22); }
.spectrum i { width: 6px; background: linear-gradient(#fff 50%, #000 50%); }

.lrow { display: flex; align-items: center; height: 18px; margin: 0 3px; border-bottom: 1px solid #d4d4cc; flex: none; }
.lrow + .lrow { height: 20px; margin: 0; padding: 0 3px; }
.blend { width: 77px; height: 13px; margin-right: 3px; }
.pct { display: flex; height: 13px; margin-left: auto; }
.pct input { width: 28px; padding-left: 4px; border: 1px solid #d3d1c4; background: #f2f2ee; color: #b4b1a4; }
.pct button { display: flex; align-items: center; justify-content: center; width: 10px; background: #c4d5fa; }
.pct svg { width: 4px; height: 6px; }
.locks { display: flex; gap: 4px; margin-left: 5px; }
.locks svg { width: 9px; height: 9px; }
.fill { margin-left: auto; }
.fill + .pct { margin-left: 3px; }
.list { display: flex; height: 143px; overflow: hidden; }
.list ul { display: flex; flex-direction: column; justify-content: flex-end; flex: 1; min-width: 0; overflow: hidden; }
.list li { display: flex; flex: none; height: 28px; }
.vis { display: flex; align-items: center; justify-content: center; width: 18px; flex: none; border-right: 1px solid #d0d0c8; }
.vis svg, .eff svg { width: 9px; height: 8px; }
.ly { display: flex; align-items: center; gap: 5px; flex: 1; min-width: 0; padding-left: 25px; background: #eee; white-space: nowrap; border-bottom: 1px solid #c8c6bc; }
.th { width: 18px; height: 24px; flex: none; border: 1px solid #555; background: #fff; }
.tt { width: 24px; height: 24px; font: bold 14px/22px "Liberation Serif", serif; text-align: center; }
.list .set { height: 17px; }
.set .ly { padding-left: 15px; }
.tri { width: 7px; height: 6px; }
.fold { width: 12px; height: 10px; margin-right: 4px; }
.copy .ly { border-bottom: 0; }
.fx { font: italic bold 10px/10px "Liberation Serif", serif; }
.copy .fx { margin-left: -2px; }
.fold-fx { display: flex; align-items: center; width: 8px; height: 28px; margin-left: auto; border-left: 1px solid #999; background: linear-gradient(90deg, #ccc, #eee); }
.fold-fx svg { width: 5px; height: 3px; }
.list .sub { height: 15px; }
.sub .ly { padding-left: 50px; border-bottom: 0; }
.list .eff { height: 14px; }
.eff .ly { border-bottom: 1px solid #c8c6bc; }
.sel .ly { background: #316ac5; color: #fff; border-bottom: 0; }
.sel .tt { color: #111; }
.lscroll { display: flex; flex-direction: column; justify-content: space-between; width: 10px; margin-right: 2px; padding: 1px 0; background: #f8f8f2; flex: none; }
.lscroll svg { width: 9px; height: 10px; }
.lbar { display: flex; align-items: center; justify-content: space-between; height: 15px; padding: 0 1px 0 5px; border-top: 1px solid #ccc; }
.lbar svg { width: 12px; height: 10px; }

.dialog { position: absolute; left: 99px; top: 212px; width: 401px; border: 3px solid #0a46e0; border-top: 0; border-radius: 5px 5px 0 0; background: #ececec; overflow: hidden; font-size: 10px; line-height: 12px; }
.dialog header { display: flex; align-items: center; justify-content: space-between; height: 22px; margin: 0 -3px; padding: 1px 4px 0 5px; background: linear-gradient(#0a3fd0, #2a7af8 10%, #0358e8 30%, #0560f2 70%, #0a66fb 88%, #0346d0); }
.dialog h2 { color: #fff; font: bold 10px/14px Roboto, sans-serif; text-shadow: 1px 1px 0 #0a2a80; }
.x { width: 16px; height: 16px; border: 1px solid #fff; border-radius: 3px; background: linear-gradient(135deg, #f0906c, #d04018); }
.x svg { width: 14px; height: 14px; }
.dbody { display: flex; height: 247px; padding-left: 6px; }
.pick { width: 191px; padding-top: 21px; }
.field { display: flex; align-items: flex-end; height: 190px; padding: 0 0 14px 3px; border: 1px solid #b8b5a8; border-right-color: #fff; border-bottom-color: #fff; background: linear-gradient(transparent, #000), linear-gradient(90deg, #fff, #0ff); }
.field i { width: 8px; height: 8px; border: 1px solid #fff; border-radius: 50%; }
.web { display: flex; align-items: center; gap: 2px; margin-top: 6px; font-size: 9px; }
.web input { appearance: none; width: 10px; height: 10px; border: 1px solid #3c6494; background: #f4f4f4; }
.huewrap { display: flex; align-items: center; height: 190px; margin-top: 21px; gap: 1px; }
.huewrap svg { width: 6px; height: 8px; }
.hue { width: 16px; height: 190px; border: 1px solid #b8b5a8; background: linear-gradient(#f00, #f0f 17%, #00f 33%, #0ff 50%, #0f0 66%, #ff0 83%, #f00); }
.side { flex: 1; margin-left: 2px; }
.top { display: flex; height: 104px; padding-top: 7px; }
.preview { display: flex; flex-direction: column; align-items: center; width: 45px; padding-top: 4px; font-size: 8px; line-height: 12px; }
.preview i { width: 44px; height: 50px; margin: 2px 0 1px; background: #191a1a; }
.warn { display: flex; flex-direction: column; gap: 2px; width: 28px; padding: 47px 0 0 7px; }
.warn svg { width: 9px; height: 9px; }
.warn i { width: 9px; height: 9px; background: #033; border: 1px solid #222; }
.btns { display: flex; flex-direction: column; width: 86px; gap: 6px; }
.btns button { height: 14px; border: 1px solid #3c6494; border-radius: 2px; background: linear-gradient(#fff, #e8e6dc); line-height: 12px; }
.btns .default { box-shadow: inset 0 0 0 1px #a8c4f0; }
.btns .spaced { margin-top: 6px; }
.vals { display: flex; gap: 8px; }
.col { display: flex; flex-direction: column; gap: 3px; width: 75px; }
.v { display: flex; align-items: center; height: 16px; }
.brk { margin-top: 3px; }
.v input[type="radio"] { appearance: none; width: 10px; height: 10px; border: 1px solid #3c6494; border-radius: 50%; background: #f8f8f8; flex: none; }
.v input[type="radio"]:checked { background: radial-gradient(#1a9a1a 0 30%, #f8f8f8 40%); }
.v label { width: 13px; margin-left: 1px; }
.v input:not([type]) { width: 25px; height: 16px; padding-left: 3px; border: 1px solid #a4bcd4; background: #fff; }
.v span { margin-left: 3px; }
.v .deg { align-self: flex-start; }
.lab label { width: 14px; }
.v.lab input:not([type]) { width: 30px; }
.v.cmyk label { width: 22px; margin: 0 3px 0 0; text-align: right; }
.hex.v label { width: 9px; }
.v.hex input:not([type]) { width: 41px; }
.hex { margin-top: 4px; }

.marks, .lines { position: absolute; left: 0; top: 0; width: 700px; height: 564px; pointer-events: none; }
.note { position: absolute; left: 145px; height: 23px; padding: 0 11px; border: 1px solid #8c8c78; background: #ffffd4; box-shadow: 2px 2px 1px #777; font: bold 11px/21px "Liberation Sans", Arial, sans-serif; white-space: nowrap; }
.n1 { left: 144px; top: 113px; width: 338px; }
.n2 { top: 145px; width: 181px; }
.n3 { top: 176px; width: 182px; }
.hl { position: absolute; background: rgba(0, 255, 255, .4); border: 1px solid rgba(90, 150, 150, .6); box-shadow: 1px 1px 1px #666; }
.hl-tool { left: 8px; top: 417px; width: 26px; height: 25px; }
.hl-sw { left: 2px; top: 477px; width: 30px; height: 29px; }
.hl-color { left: 539px; top: 265px; width: 29px; height: 30px; }
.hl-hex { left: 340px; top: 450px; width: 46px; height: 30px; }
```
